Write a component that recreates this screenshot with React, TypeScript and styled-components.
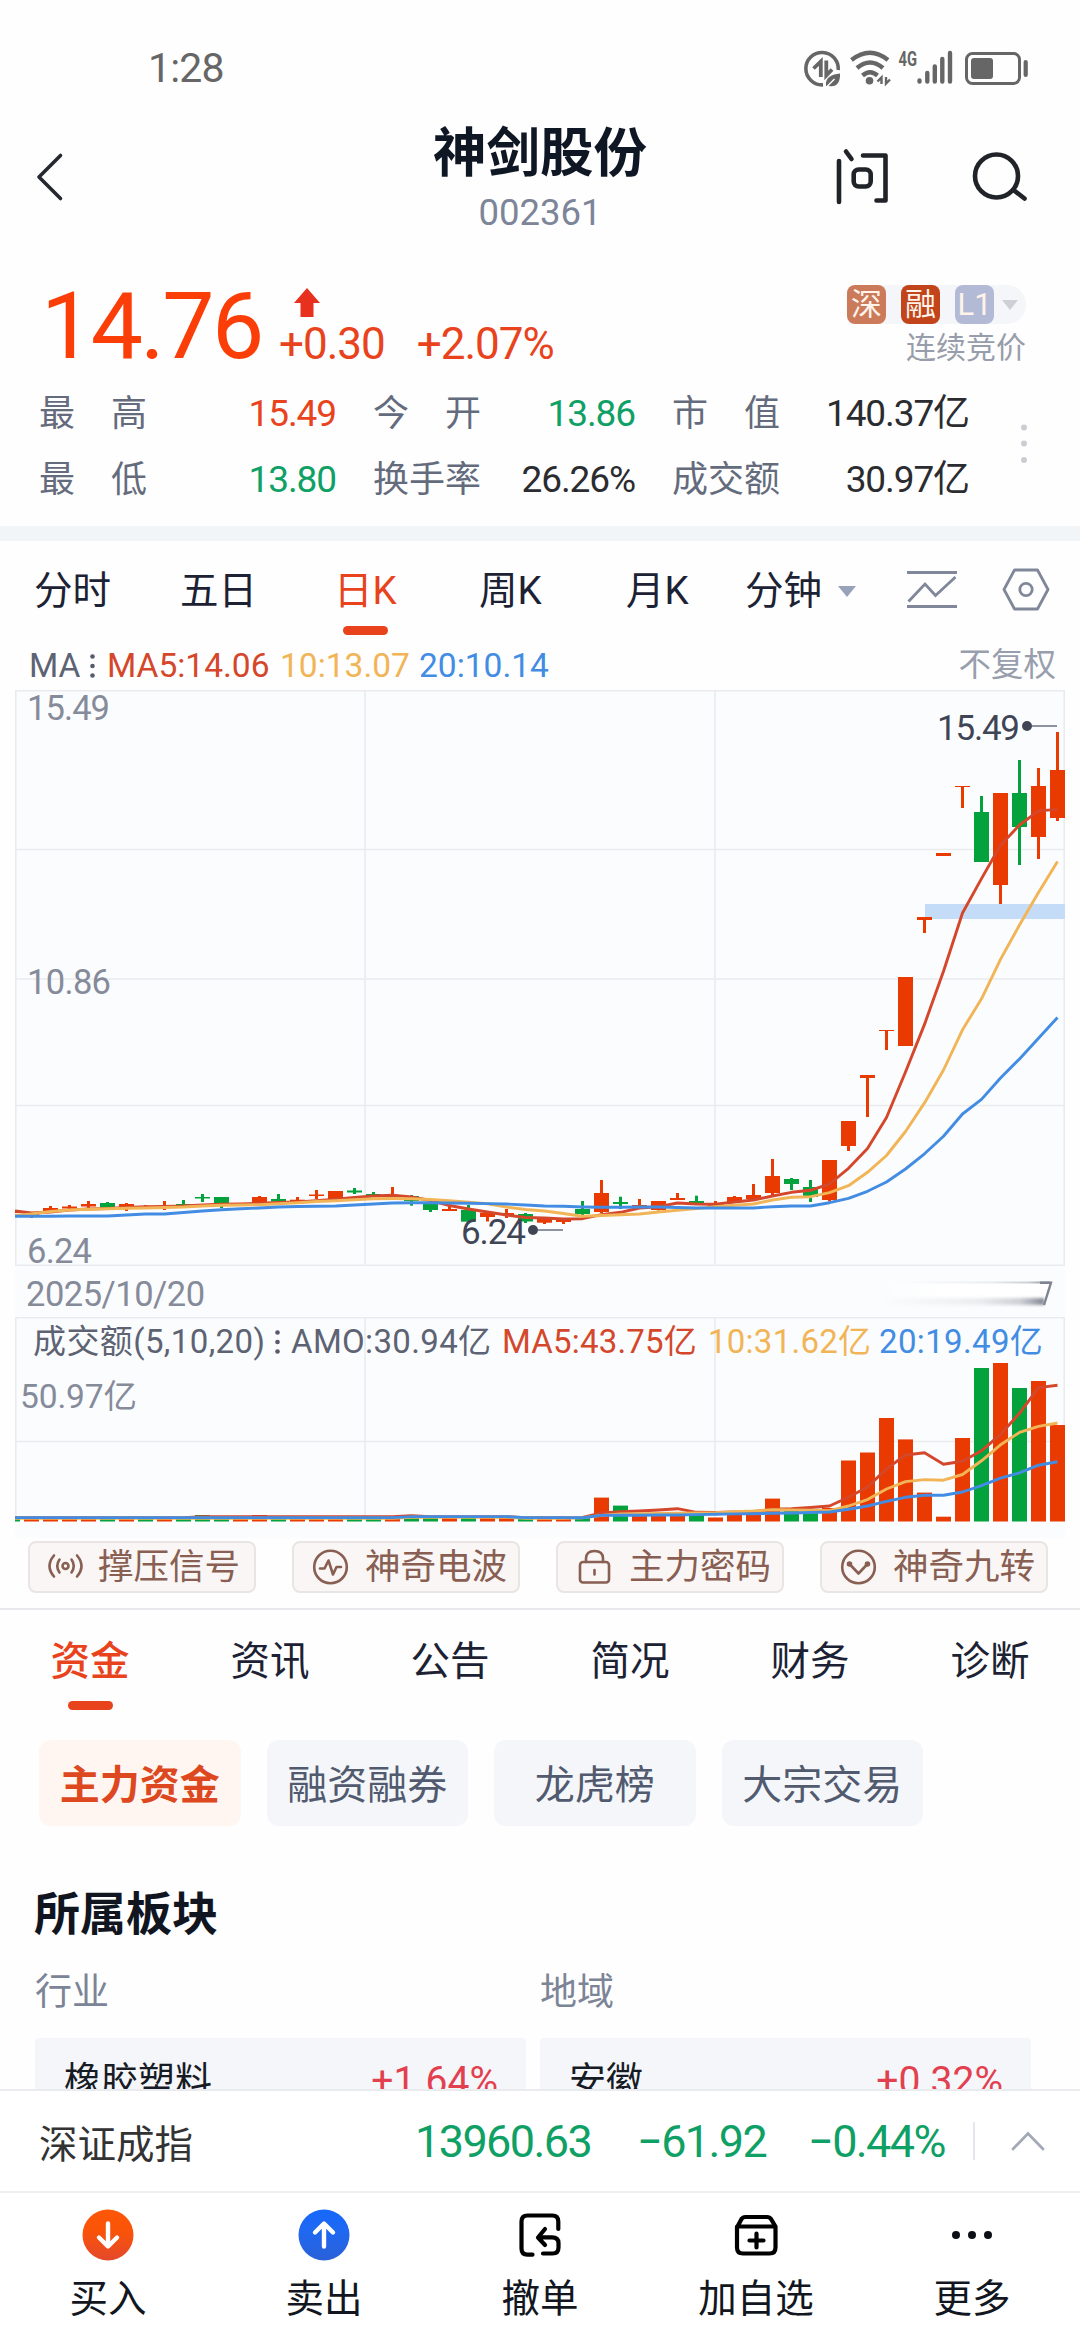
import React from "react";
import styled, { createGlobalStyle } from "styled-components";

const RED = "#e8431c";
const GREEN = "#0fa065";
const UP = "#e93a02";
const DOWN = "#04a23c";
const MA5 = "#d4472b";
const MA10 = "#f1b557";
const MA20 = "#428de3";
const INK = "#1c2233";
const FONT = `Roboto, "Noto Sans CJK SC", sans-serif`;

const GlobalStyle = createGlobalStyle`
  * { box-sizing: border-box; }
  body { margin: 0; background: #fff; font-family: ${FONT}; color: ${INK}; }
  svg { display: block; flex: none; overflow: visible; }
  svg text { font-family: ${FONT}; }
`;

const Page = styled.div`
  width: 1080px;
  height: 2340px;
  overflow: hidden;
  display: flex;
  flex-direction: column;
  background: #fefefe;
`;

/* ---------- status bar and header ---------- */

const StatusBar = styled.div`
  height: 118px;
  flex: none;
  padding: 17px 52px 0 148px;
  display: flex;
  align-items: center;
  justify-content: space-between;
  color: #666;
`;
const Clock = styled.span`
  font-size: 41px;
  letter-spacing: -0.8px;
`;
const Header = styled.header`
  height: 118px;
  flex: none;
  display: grid;
  grid-template-columns: 300px 1fr 300px;
  padding: 0 53px 0 36px;
`;
const HeaderSide = styled.div<{ $end?: boolean }>`
  display: flex;
  align-items: center;
  justify-content: ${(p) => (p.$end ? "flex-end" : "flex-start")};
  gap: 81px;
`;
const TitleBlock = styled.div`
  display: flex;
  flex-direction: column;
  align-items: center;
  padding: 6px 0 0 17px;
`;
const Title = styled.h1`
  margin: 0;
  font-size: 53.5px;
  font-weight: 700;
  line-height: 60px;
  color: #0f1624;
  white-space: nowrap;
`;
const Code = styled.span`
  margin-top: 7px;
  font-size: 36.5px;
  line-height: 44px;
  color: #7d8598;
`;

/* ---------- quote ---------- */

const Quote = styled.section`
  height: 290px;
  flex: none;
  padding-top: 44px;
`;
const PriceRow = styled.div`
  display: flex;
  height: 99px;
  padding: 0 54px 0 41px;
`;
const Price = styled.span`
  width: 234px;
  margin-top: 7px;
  font-size: 93px;
  line-height: 80px;
  letter-spacing: -2.6px;
  color: #fb3e08;
`;
const ChangeBlock = styled.div`
  padding: 8px 0 0 4px;
`;
const ChangeArrow = styled.svg`
  margin-left: 15px;
`;
const ChangeLine = styled.div`
  display: flex;
  gap: 32px;
  margin-top: 5px;
  font-size: 44px;
  line-height: 44px;
  letter-spacing: -1px;
  color: ${RED};
`;
const QuoteSide = styled.div`
  margin-left: auto;
  padding-top: 5px;
  display: flex;
  flex-direction: column;
  align-items: flex-end;
`;
const Badges = styled.div`
  display: flex;
  gap: 15px;
  padding-right: 8px;
  border-radius: 8px 20px 20px 8px;
  background: #f5f6fa;
  align-items: center;
`;
const Badge = styled.span<{ $bg: string }>`
  width: 39px;
  height: 39px;
  border-radius: 8px;
  background: ${(p) => p.$bg};
  color: #fff3ea;
  font-size: 31px;
  line-height: 39px;
  text-align: center;
`;
const BadgeCaret = styled.svg`
  margin-left: -7px;
`;
const Phase = styled.span`
  margin-top: 6px;
  font-size: 30px;
  line-height: 36px;
  color: #979daa;
`;
const StatsWrap = styled.div`
  display: flex;
  padding-left: 39px;
`;
const Stats = styled.div`
  display: grid;
  grid-template-columns: 297px 262px 297px;
  column-gap: 37px;
  grid-auto-rows: 66px;
`;
const Stat = styled.div`
  display: flex;
  justify-content: space-between;
  line-height: 70px;
  font-size: 36px;
`;
const StatLabel = styled.span`
  color: #646b7c;
`;
const StatValue = styled.span<{ $color?: string }>`
  font-size: 37px;
  letter-spacing: -1.1px;
  color: ${(p) => p.$color || "#2a2c30"};
`;
const DotsV = styled.svg`
  margin: 45px 0 0 51px;
`;
const Band = styled.div`
  height: 15px;
  flex: none;
  background: #f2f5f8;
`;

/* ---------- period tabs ---------- */

const Periods = styled.nav`
  height: 98px;
  flex: none;
  display: grid;
  grid-template-columns: 146px 154px 145px 147px 119px 162px 95px auto;
  padding-left: 34px;
  align-items: center;
`;
const Period = styled.span<{ $active?: boolean }>`
  position: relative;
  justify-self: start;
  display: flex;
  align-items: center;
  gap: 16px;
  font-size: 38.5px;
  line-height: 100px;
  color: ${(p) => (p.$active ? RED : INK)};
`;
const Underline = styled.i<{ $bottom: number }>`
  position: absolute;
  left: 50%;
  bottom: ${(p) => p.$bottom}px;
  width: 45px;
  height: 9px;
  margin-left: -22px;
  border-radius: 5px;
  background: ${RED};
`;

/* ---------- chart ---------- */

const MaRow = styled.div`
  height: 51px;
  flex: none;
  display: grid;
  grid-template-columns: 61px 17px 173px 139px 1fr auto;
  padding: 0 24px 0 29px;
  align-items: center;
  font-size: 33.5px;
  line-height: 51px;
`;
const Legend = styled.span<{ $color: string; $ls?: number }>`
  color: ${(p) => p.$color};
  letter-spacing: ${(p) => p.$ls ?? 0}px;
  white-space: nowrap;
`;
const Adjust = styled.span`
  font-size: 32.5px;
  line-height: 53px;
  color: #989ead;
`;
const ChartPanel = styled.section`
  height: 848px;
  flex: none;
  margin: 0 15px;
  background: #fbfcfe;
`;
const DateRow = styled.div`
  height: 51px;
  display: flex;
  align-items: center;
  justify-content: space-between;
  padding: 5px 13px 0 11px;
  font-size: 34.5px;
  letter-spacing: -0.5px;
  color: #868b9a;
`;
const VolumePanel = styled.div`
  position: relative;
`;
const VolumeLegend = styled.div`
  position: absolute;
  left: 18px;
  top: 0;
  display: grid;
  grid-template-columns: 242px 16px 211px 206px 171px auto;
  align-items: center;
  font-size: 33px;
  line-height: 49px;
`;

/* ---------- signals ---------- */

const Signals = styled.div`
  height: 72px;
  flex: none;
  display: flex;
  gap: 36px;
  padding: 3px 28px 0;
  border-bottom: 2px solid #e6e8ec;
`;
const Signal = styled.button<{ $gap: number }>`
  width: 228px;
  height: 52px;
  display: flex;
  align-items: center;
  padding: 0 0 0 ${(p) => p.$gap + 2}px;
  gap: ${(p) => p.$gap}px;
  border: 2px solid #e9e5e5;
  border-radius: 8px;
  background: #f9f6f5;
  font: 35.5px/48px ${FONT};
  color: #885f52;
  white-space: nowrap;
`;

/* ---------- lower content ---------- */

const Lower = styled.main`
  flex: 1;
  min-height: 0;
  overflow: hidden;
`;
const InfoTabs = styled.nav`
  height: 100px;
  display: grid;
  grid-template-columns: repeat(6, 1fr);
`;
const InfoTab = styled.span<{ $active?: boolean }>`
  position: relative;
  height: 100px;
  text-align: center;
  font-size: 39.5px;
  line-height: 103px;
  font-weight: ${(p) => (p.$active ? 500 : 400)};
  color: ${(p) => (p.$active ? RED : INK)};
`;
const Chips = styled.div`
  display: flex;
  gap: 26px;
  margin-top: 30px;
  padding-left: 39px;
`;
const Chip = styled.span<{ $active?: boolean }>`
  width: 201.5px;
  height: 86px;
  border-radius: 12px;
  text-align: center;
  font-size: 40px;
  line-height: 91px;
  font-weight: ${(p) => (p.$active ? 700 : 400)};
  color: ${(p) => (p.$active ? "#dd4820" : "#515a6e")};
  background: ${(p) => (p.$active ? "#fff6f2" : "#f4f6fa")};
`;
const SectionTitle = styled.h2`
  margin: 58px 0 29px 34px;
  font-size: 46px;
  line-height: 60px;
  font-weight: 700;
  color: #10151f;
`;
const Sectors = styled.div`
  display: grid;
  grid-template-columns: 491px 491px;
  gap: 14px;
  padding-left: 35px;
`;
const SectorLabel = styled.div`
  margin-bottom: 25px;
  font-size: 37px;
  line-height: 40px;
  color: #7c8497;
`;
const SectorCard = styled.div`
  height: 86px;
  padding: 0 28px 0 29px;
  display: flex;
  justify-content: space-between;
  font-size: 37px;
  line-height: 87px;
  color: #171b24;
  background: #f4f6fa;
  border-radius: 4px;
`;
const SectorChange = styled.span`
  color: #e3404f;
  font-size: 39px;
`;

/* ---------- bottom ---------- */

const IndexBar = styled.div`
  height: 102px;
  flex: none;
  display: grid;
  grid-template-columns: 376px 222px 171px 165px 38px auto;
  align-items: center;
  padding: 0 0 0 39px;
  border-top: 2px solid #e9ebee;
  background: #fff;
`;
const IndexName = styled.span`
  font-size: 38.5px;
  color: #333;
`;
const IndexValue = styled.span`
  font-size: 45px;
  letter-spacing: -1.6px;
  color: ${GREEN};
  white-space: nowrap;
`;
const Divider = styled.i`
  width: 2px;
  height: 38px;
  background: #e3e6eb;
`;
const ActionBar = styled.footer`
  height: 149px;
  flex: none;
  display: grid;
  grid-template-columns: repeat(5, 1fr);
  border-top: 2px solid #eceef0;
  background: #fff;
`;
const Action = styled.div`
  display: flex;
  flex-direction: column;
  align-items: center;
  padding-top: 16px;
  font-size: 38.5px;
  line-height: 50px;
  color: #111620;
`;
const ActionIcon = styled.div`
  height: 52px;
  margin-bottom: 13px;
  display: flex;
  align-items: center;
`;

/* ---------- chart data (pixel levels on the 1080-wide canvas) ---------- */

type Candle = [color: "r" | "g", high: number, top: number, bottom: number, low: number];

const CANDLES: Candle[] = [
  ["r", 1209, 1210, 1213, 1213], ["r", 1213, 1214, 1216, 1218], ["r", 1206, 1208, 1211, 1211],
  ["r", 1205, 1206.5, 1208.5, 1210], ["r", 1201, 1204, 1206.5, 1208.5], ["g", 1202, 1203, 1208, 1208],
  ["r", 1203, 1204, 1208, 1211], ["r", 1205, 1206, 1208, 1208], ["r", 1201, 1205.5, 1207.5, 1210],
  ["g", 1200, 1204, 1206, 1206], ["g", 1194, 1197, 1198.5, 1202], ["g", 1197, 1197, 1204, 1208],
  ["r", 1203, 1204, 1206, 1206], ["r", 1196, 1197, 1203, 1203], ["g", 1194, 1199, 1201.5, 1202],
  ["r", 1197, 1199.7, 1201.5, 1202], ["r", 1190, 1194.5, 1196, 1199], ["r", 1191, 1191, 1199, 1199],
  ["g", 1188, 1190.5, 1192.5, 1194], ["g", 1192, 1194, 1196, 1197], ["r", 1187, 1195, 1197, 1198],
  ["g", 1195, 1196, 1201, 1205.7], ["g", 1203, 1204, 1210, 1212], ["r", 1204.5, 1209, 1211, 1211],
  ["g", 1205, 1210, 1221.7, 1222], ["r", 1212, 1212.7, 1217, 1221.5], ["r", 1209, 1213, 1215, 1218],
  ["g", 1213, 1214, 1221.5, 1223], ["r", 1217, 1218, 1222.7, 1224], ["r", 1218, 1219, 1222, 1224],
  ["g", 1201, 1209, 1214, 1215], ["r", 1180, 1193, 1212, 1213], ["g", 1196.7, 1202, 1204, 1209],
  ["r", 1199, 1205, 1206.5, 1207], ["r", 1201, 1201, 1210, 1210.5], ["r", 1193, 1198, 1200, 1200],
  ["g", 1195.7, 1201, 1203.5, 1204], ["r", 1201, 1203, 1206, 1206], ["r", 1196, 1197, 1202, 1202],
  ["r", 1184, 1195, 1199, 1199], ["r", 1159, 1176, 1193, 1195], ["g", 1178, 1179, 1184, 1190],
  ["g", 1180, 1187, 1197, 1202], ["r", 1160, 1160, 1200, 1201.5], ["r", 1121, 1121, 1146, 1151],
  ["r", 1075, 1075, 1078, 1117], ["r", 1030, 1030, 1031, 1050], ["r", 977, 977, 1046, 1046],
  ["r", 917, 917, 920, 933], ["r", 853, 853, 856, 856], ["r", 786, 786, 787, 808],
  ["g", 796, 812, 862, 862], ["r", 793, 793, 885, 904], ["g", 760, 793, 827, 865],
  ["r", 768, 786, 837, 859], ["r", 732, 770, 818, 821],
];

const PRICE_MA5 = [
  1211, 1213, 1212, 1210, 1209, 1208.5, 1207.5, 1206.7, 1206.5, 1206, 1205, 1204.3, 1204, 1203.3,
  1202.5, 1202, 1200.8, 1199.3, 1197.5, 1196, 1195.3, 1197, 1200.5, 1205.5, 1209, 1212, 1215, 1217.5,
  1218, 1219, 1218.7, 1214.7, 1212.3, 1208, 1206.7, 1203, 1204, 1204.3, 1202, 1200, 1196, 1192.3,
  1190.3, 1184, 1168.3, 1148.5, 1117.5, 1072, 1024.4, 971.2, 913, 878.6, 845.3, 825, 810.9, 809.4,
];
const PRICE_MA10 = [
  1215.5, 1214, 1211.5, 1210, 1209.2, 1208.8, 1208.3, 1208, 1207.5, 1207, 1206, 1205.3, 1205, 1204.7,
  1203.7, 1202.7, 1201.5, 1200.7, 1199.7, 1198.7, 1198.5, 1198.7, 1199.5, 1200.8, 1202.3, 1203.7, 1207,
  1209.5, 1211, 1213.5, 1216.3, 1215.5, 1214.7, 1214, 1212, 1210.3, 1208.5, 1206.7, 1205.3, 1204, 1200,
  1197.3, 1196.7, 1192.7, 1185.7, 1172.3, 1155.5, 1131.5, 1102.9, 1070, 1029.8, 998.8, 959.4, 925,
  892.4, 861.4,
];
const PRICE_MA20 = [
  1216.3, 1216.3, 1216.2, 1216, 1216, 1216, 1215, 1214, 1214, 1212.5, 1211, 1209.7, 1208.7, 1208, 1207,
  1206.5, 1206.2, 1206, 1205, 1204, 1203, 1202.7, 1202.8, 1203, 1203.3, 1203.6, 1204, 1205, 1206,
  1206.3, 1207, 1207.3, 1207.2, 1207, 1207, 1207.5, 1208, 1208, 1208, 1208, 1206.7, 1206, 1206, 1202.7,
  1198.3, 1191.3, 1182, 1169, 1153.8, 1136.2, 1114, 1099.4, 1078, 1058.9, 1038.2, 1017.5,
];

const VOLUME_COLORS = "grrrrgrgrgggrrgrrrggrggrgrrgrrgrgrrrgrrrrggrrrrrrrrgrgrr";
const VOLUME_TOPS: Record<number, number> = {
  10: 1515, 13: 1515, 31: 1497.6, 32: 1505.6, 33: 1515, 34: 1515, 35: 1514, 36: 1514, 37: 1517.5,
  38: 1515, 39: 1510, 40: 1498.6, 41: 1508, 42: 1512, 43: 1508, 44: 1460.5, 45: 1452.5, 46: 1418,
  47: 1439.4, 48: 1492.6, 49: 1516.7, 50: 1438, 51: 1368, 52: 1363, 53: 1388, 54: 1381, 55: 1425,
};
const flat = Array.from({ length: 30 }, (_, i) => (i > 20 && i < 27 ? 1516.6 : 1517.6));
const VOL_MA5 = [
  ...flat.map((v, i) => (i > 9 && i < 22 ? v - 1 : v)),
  1517.4, 1513, 1511.8, 1511, 1510, 1508.7, 1512.3, 1512.5, 1512, 1511.7, 1509.3, 1508.7, 1507.5, 1506,
  1497.3, 1487, 1468.9, 1455, 1452.8, 1464.2, 1461.2, 1450.8, 1434.4, 1413.3, 1387.6, 1385.3,
];
const VOL_MA10 = [
  ...flat.map((v) => v + 0.6),
  1517.7, 1515.4, 1514, 1513.7, 1513.5, 1513.2, 1513, 1512.7, 1511.7, 1511, 1509.7, 1510, 1510.3, 1510.7,
  1506, 1499.6, 1489, 1481.6, 1479.6, 1480.2, 1474.5, 1460.8, 1444.8, 1432.4, 1426.4, 1423,
];
const VOL_MA20 = [
  ...flat,
  1517.7, 1515.4, 1515.2, 1515.2, 1515, 1515, 1514.6, 1514.2, 1513.9, 1513.7, 1513.3, 1513, 1512.5, 1512,
  1509.3, 1506, 1501.3, 1497.3, 1495.3, 1495.3, 1492, 1485.6, 1478.2, 1472.9, 1465.2, 1461.8,
];

const cx = (i: number) => 12.5 + 19 * i;
const line = (ys: number[]) => ys.map((y, i) => `${i === 0 ? 15 : cx(i)},${y}`).join(" ");

/* The first candle is cut by the left edge of the plot. */
function slot(i: number) {
  const x = Math.max(15, cx(i) - 7.5);
  return { x, width: cx(i) + 7.5 - x };
}

function MaLines({ sets }: { sets: [number[], number[], number[]] }) {
  const colors = [MA5, MA10, MA20];
  return (
    <g fill="none" strokeWidth="2.9" strokeLinejoin="round">
      {sets.map((s, k) => (
        <polyline key={k} points={line(s)} stroke={colors[k]} />
      ))}
    </g>
  );
}

function PriceChart() {
  return (
    <svg width="1050" height="576" viewBox="15 690 1050 576">
      <g stroke="#e9ebef" strokeWidth="1.6">
        {[690.8, 849.5, 979, 1105.5, 1265.2].map((y) => (
          <line key={y} x1="15" x2="1065" y1={y} y2={y} />
        ))}
        {[15.8, 365, 715, 1064.2].map((x) => (
          <line key={x} x1={x} x2={x} y1="690" y2="1266" />
        ))}
      </g>
      <rect x="925" y="904" width="140" height="15" fill="#c5dcf8" />
      {CANDLES.map(([c, high, top, bottom, low], i) => (
        <g key={i} fill={c === "r" ? UP : DOWN}>
          {i > 0 && <rect x={cx(i) - 1.5} y={high} width="3" height={low - high} />}
          <rect {...slot(i)} y={top} height={bottom - top} />
        </g>
      ))}
      <MaLines sets={[PRICE_MA5, PRICE_MA10, PRICE_MA20]} />
      <g fontSize="34.5" fill="#868b9a">
        <text x="27" y="720" textLength="83">15.49</text>
        <text x="27" y="994" textLength="84">10.86</text>
        <text x="27" y="1263" textLength="65">6.24</text>
      </g>
      <g fontSize="35" fill="#3f4555">
        <text x="937" y="740" textLength="83">15.49</text>
        <text x="461" y="1244" textLength="65">6.24</text>
        <circle cx="1027" cy="726" r="5" />
        <circle cx="533" cy="1230" r="5" />
      </g>
      <g stroke="#8d93a1" strokeWidth="2">
        <line x1="1032" x2="1057" y1="726" y2="726" />
        <line x1="538" x2="563" y1="1230" y2="1230" />
      </g>
    </svg>
  );
}

function VolumeChart() {
  return (
    <svg width="1050" height="221" viewBox="15 1317 1050 221">
      <g stroke="#e9ebef" strokeWidth="1.6">
        <line x1="15" x2="1065" y1="1317.8" y2="1317.8" />
        <line x1="15" x2="1065" y1="1441.5" y2="1441.5" />
        {[15.8, 365, 715, 1064.2].map((x) => (
          <line key={x} x1={x} x2={x} y1="1317" y2="1521" />
        ))}
      </g>
      {VOLUME_COLORS.split("").map((c, i) => {
        const top = VOLUME_TOPS[i] ?? 1517;
        return <rect key={i} {...slot(i)} y={top} height={1521.5 - top} fill={c === "r" ? UP : DOWN} />;
      })}
      <MaLines sets={[VOL_MA5, VOL_MA10, VOL_MA20]} />
      <text x="20" y="1408" fontSize="33.5" fill="#868b9a" textLength="117">50.97亿</text>
    </svg>
  );
}

function DragHandle() {
  return (
    <svg width="180" height="36" viewBox="870 1276 180 36">
      <defs>
        <linearGradient id="edge" x1="0" x2="1">
          <stop offset="0" stopColor="#868b9a" stopOpacity="0" />
          <stop offset="0.6" stopColor="#868b9a" stopOpacity="0.16" />
          <stop offset="0.85" stopColor="#868b9a" stopOpacity="0.4" />
          <stop offset="1" stopColor="#767b88" stopOpacity="0.9" />
        </linearGradient>
        <linearGradient id="veil" x1="0" x2="1">
          <stop offset="0" stopColor="#fff" stopOpacity="0" />
          <stop offset="0.4" stopColor="#fff" />
        </linearGradient>
        <filter id="soft" x="-5%" width="110%" y="-100%" height="300%">
          <feGaussianBlur stdDeviation="1 1.8" />
        </filter>
      </defs>
      <path d="M876 1282H1050L1042 1305H876z" fill="url(#veil)" />
      <rect x="880" y="1298" width="162" height="7" fill="url(#edge)" filter="url(#soft)" />
      <rect x="900" y="1281.5" width="148" height="2" fill="url(#edge)" />
      <path d="M1038 1282.7H1049L1042 1305" fill="none" stroke="#7f8492" strokeWidth="2.4" />
    </svg>
  );
}

/* ---------- icons ---------- */

const LegendDots = () => (
  <svg width="5" height="26" viewBox="0 0 5 26" fill="#555b6b">
    <circle cx="2.5" cy="3.5" r="2.3" />
    <circle cx="2.5" cy="13" r="2.3" />
    <circle cx="2.5" cy="22.5" r="2.3" />
  </svg>
);

const StatusIcons = () => (
  <svg width="226" height="38" viewBox="802 47 226 38" fill="none" stroke="#666">
    <path d="M838.2 68A16.2 16.2 0 1 0 823 82.8" strokeWidth="3.6" />
    <path d="M820.8 75V59.5L813.5 66.5" strokeWidth="3.8" />
    <path d="M826.3 58.5V73.5L832 67.5" strokeWidth="3.8" />
    <path d="M826 84C825 75 832 72.500 840 71.500C840.500 81 836 85.500 829 84z" fill="#666" stroke="none" />
    <path d="M826.500 85L834.500 77" stroke="#fff" strokeWidth="1.500" />
    <g strokeWidth="4.400">
      <path d="M851.500 58Q870 43.500 888 58" />
      <path d="M857 66Q870 55 883 66" />
      <path d="M862.500 73.500Q870 67 877.500 73.500" />
    </g>
    <circle cx="869.500" cy="78.700" r="3.800" fill="#666" stroke="none" />
    <path d="M881.500 82V75.500L877.500 79.500M886 75V81.500L890 77.500" strokeWidth="2.400" />
    <text x="898.500" y="63.500" fontSize="20" fontWeight="700" fill="#666" stroke="none" textLength="18.500" lengthAdjust="spacingAndGlyphs">4G</text>
    <path d="M919.500 78.500V79.500M927.300 71V79.500M934.800 64.500V79.500M942.300 57V79.500M950 51V79.500" strokeWidth="4.400" strokeLinecap="round" />
    <rect x="966.500" y="51.500" width="53" height="30" rx="6" strokeWidth="3" />
    <rect x="971" y="56" width="22" height="21" rx="3" fill="#666" stroke="none" />
    <path d="M1025.700 60V73" strokeWidth="4.200" strokeLinecap="round" />
  </svg>
);

const BackIcon = () => (
  <svg width="28" height="50" viewBox="0 0 28 50" fill="none" stroke="#25282e" strokeWidth="3.600" strokeLinecap="round" strokeLinejoin="round">
    <path d="M24.500 3.500L3 25L24.500 46.500" />
  </svg>
);

const AskIcon = () => (
  <svg width="54" height="58" viewBox="835 148 54 58" fill="none" stroke="#202328" strokeWidth="4.600" strokeLinecap="round" strokeLinejoin="round">
    <path d="M838 161V202M845 151.500L850.500 159M862 155.500H884.500V200.500H875.500" />
    <rect x="852.700" y="169.500" width="17" height="17" rx="5" />
  </svg>
);

const SearchIcon = () => (
  <svg width="56" height="52" viewBox="972 152 56 52" fill="none" stroke="#202328" strokeWidth="4.600" strokeLinecap="round">
    <circle cx="997.500" cy="177" r="21.500" />
    <path d="M1014.500 191L1025.500 199.500" />
  </svg>
);

const LineStyleIcon = () => (
  <svg width="50" height="42" viewBox="0 0 50 42" fill="none" stroke="#7f8798" strokeWidth="2.800">
    <path d="M0 2.500H50M0 36.500H50M1.500 31.500L18 14L28.500 25.500L48.500 7" />
  </svg>
);

const HexIcon = () => (
  <svg width="48" height="44" viewBox="0 1.500 48 44" fill="none" stroke="#7f8798" strokeWidth="2.800" strokeLinejoin="round">
    <path d="M12.500 2.500H35.500L46 22L35.500 41.500H12.500L2 22z" />
    <circle cx="24" cy="22" r="6.200" />
  </svg>
);

const signalStroke = { fill: "none", stroke: "#885f52", strokeWidth: 2.6, strokeLinecap: "round", strokeLinejoin: "round" } as const;

const BeaconIcon = () => (
  <svg width="37" height="36" viewBox="0 0 37 36" {...signalStroke}>
    <circle cx="18.500" cy="17" r="3" />
    <path d="M12.500 10.500Q8 17 12.500 23.500M24.500 10.500Q29 17 24.500 23.500M7 6.500Q-2 17 7 27.500M30 6.500Q39 17 30 27.500" />
  </svg>
);
const PulseIcon = () => (
  <svg width="37" height="36" viewBox="0 0 37 36" {...signalStroke}>
    <circle cx="18.500" cy="18" r="16.300" />
    <path d="M8 19.500H12.500L16.500 11.500L21 25.500L24.500 18H29" />
  </svg>
);
const LockIcon = () => (
  <svg width="37" height="36" viewBox="0 0 37 36" {...signalStroke}>
    <rect x="4" y="13" width="29" height="20.500" rx="3" />
    <path d="M10 13V9.500Q10 2 18.500 2T27 9.500V13M18.500 21V25.500" />
  </svg>
);
const TurnIcon = () => (
  <svg width="37" height="36" viewBox="0 0 37 36" {...signalStroke}>
    <circle cx="18.500" cy="18" r="16.300" />
    <path d="M9 14.500L18.500 24.500L28 14.500" />
    <circle cx="9.500" cy="15" r="1.500" fill="#885f52" />
    <circle cx="27.500" cy="15" r="1.500" fill="#885f52" />
  </svg>
);

const RoundArrow = ({ up }: { up?: boolean }) => (
  <svg width="52" height="52" viewBox="0 0 52 52">
    <defs>
      <linearGradient id={up ? "sell" : "buy"} x1="0" y1="0" x2="0" y2="1">
        <stop offset="0" stopColor={up ? "#1668fb" : "#fd5607"} />
        <stop offset="0.4" stopColor={up ? "#1f68f2" : "#fa5408"} />
        <stop offset="1" stopColor={up ? "#2a60d8" : "#e4482a"} />
      </linearGradient>
    </defs>
    <circle cx="26" cy="26" r="25.500" fill={up ? "url(#sell)" : "url(#buy)"} />
    <path
      d={up ? "M26 37.500V15.500M17 23.500L26 14.500L35 23.500" : "M26 14.500V36.500M17 28.500L26 37.500L35 28.500"}
      fill="none" stroke="#fff" strokeWidth="4.400" strokeLinecap="round" strokeLinejoin="round"
    />
  </svg>
);

const CancelIcon = () => (
  <svg width="44" height="46" viewBox="518 2213 44 46" fill="none" stroke="#000" strokeWidth="4.200" strokeLinecap="round" strokeLinejoin="round">
    <path d="M558.300 2230V2222.500Q558.300 2216.500 552.300 2216.500H527.500Q521.500 2216.500 521.500 2222.500V2249.500Q521.500 2255.700 527.500 2255.700H532.500" />
    <path d="M545 2230L538 2238.500L545 2246M539 2238.300H552Q558.500 2238.300 558.500 2244V2248.500Q558.500 2254.500 552.500 2254.500H543" />
  </svg>
);
const AddIcon = () => (
  <svg width="46" height="46" viewBox="732 2212 46 46" fill="none" stroke="#000" strokeWidth="4.200" strokeLinecap="round" strokeLinejoin="round">
    <path d="M736.500 2226.500L740.500 2219Q741.800 2217 744.500 2217H766Q768.700 2217 770 2219L774.500 2226.500V2247.500Q774.500 2253.500 768.500 2253.500H742Q736 2253.500 736 2247.500V2226.500H774.500" />
    <path d="M748.500 2240.500H762.500M755.500 2233.500V2247.500" />
  </svg>
);
const MoreIcon = () => (
  <svg width="42" height="12" viewBox="0 0 42 12" fill="#0c1017">
    <circle cx="5" cy="6" r="4" />
    <circle cx="21" cy="6" r="4" />
    <circle cx="37" cy="6" r="4" />
  </svg>
);

const STATS: [string, string, string?][] = [
  ["最　高", "15.49", RED],
  ["今　开", "13.86", GREEN],
  ["市　值", "140.37亿"],
  ["最　低", "13.80", GREEN],
  ["换手率", "26.26%"],
  ["成交额", "30.97亿"],
];

const SIGNALS: [React.FC, string, number][] = [
  [BeaconIcon, "撑压信号", 14.5],
  [PulseIcon, "神奇电波", 16],
  [LockIcon, "主力密码", 16],
  [TurnIcon, "神奇九转", 16],
];

const SECTORS = [
  ["行业", "橡胶塑料", "+1.64%"],
  ["地域", "安徽", "+0.32%"],
];

const ACTIONS: [React.ReactNode, string][] = [
  [<RoundArrow />, "买入"],
  [<RoundArrow up />, "卖出"],
  [<CancelIcon />, "撤单"],
  [<AddIcon />, "加自选"],
  [<MoreIcon />, "更多"],
];

export default function App() {
  return (
    <Page lang="zh-CN">
      <GlobalStyle />
      <StatusBar>
        <Clock>1:28</Clock>
        <StatusIcons />
      </StatusBar>

      <Header>
        <HeaderSide><BackIcon /></HeaderSide>
        <TitleBlock>
          <Title>神剑股份</Title>
          <Code>002361</Code>
        </TitleBlock>
        <HeaderSide $end>
          <AskIcon />
          <SearchIcon />
        </HeaderSide>
      </Header>

      <Quote>
        <PriceRow>
          <Price>14.76</Price>
          <ChangeBlock>
            <ChangeArrow width="26" height="29" viewBox="0 0 26 29" fill="#e8301f">
              <path d="M13 0L26 15H19.500V29H6.500V15H0z" />
            </ChangeArrow>
            <ChangeLine>
              <span>+0.30</span>
              <span>+2.07%</span>
            </ChangeLine>
          </ChangeBlock>
          <QuoteSide>
            <Badges>
              <Badge $bg="#cb7a5a">深</Badge>
              <Badge $bg="#c2441a">融</Badge>
              <Badge $bg="#b3bad6">L1</Badge>
              <BadgeCaret width="16" height="10" viewBox="0 0 16 10" fill="#cdd0d6">
                <path d="M0 0H16L8 10z" />
              </BadgeCaret>
            </Badges>
            <Phase>连续竞价</Phase>
          </QuoteSide>
        </PriceRow>
        <StatsWrap>
          <Stats>
            {STATS.map(([label, value, color]) => (
              <Stat key={label}>
                <StatLabel>{label}</StatLabel>
                <StatValue $color={color}>{value}</StatValue>
              </Stat>
            ))}
          </Stats>
          <DotsV width="8" height="40" viewBox="0 0 8 40" fill="#cbcdd2">
            <circle cx="4" cy="3.500" r="3" />
            <circle cx="4" cy="19.500" r="3" />
            <circle cx="4" cy="36" r="3" />
          </DotsV>
        </StatsWrap>
      </Quote>
      <Band />

      <Periods>
        <Period>分时</Period>
        <Period>五日</Period>
        <Period $active>日K<Underline $bottom={6} /></Period>
        <Period>周K</Period>
        <Period>月K</Period>
        <Period>
          分钟
          <svg width="18" height="12" viewBox="0 0 18 12" fill="#98a2b8"><path d="M0 1H18L9 12z" /></svg>
        </Period>
        <LineStyleIcon />
        <HexIcon />
      </Periods>

      <MaRow>
        <Legend $color="#5d6373">MA</Legend>
        <LegendDots />
        <Legend $color={MA5}>MA5:14.06</Legend>
        <Legend $color={MA10}>10:13.07</Legend>
        <Legend $color={MA20}>20:10.14</Legend>
        <Adjust>不复权</Adjust>
      </MaRow>

      <ChartPanel>
        <PriceChart />
        <DateRow>
          <span>2025/10/20</span>
          <DragHandle />
        </DateRow>
        <VolumePanel>
          <VolumeChart />
          <VolumeLegend>
            <Legend $color="#5d6373" $ls={0.4}>成交额(5,10,20)</Legend>
            <LegendDots />
            <Legend $color="#5d6373" $ls={0.35}>AMO:30.94亿</Legend>
            <Legend $color={MA5} $ls={0.2}>MA5:43.75亿</Legend>
            <Legend $color={MA10} $ls={0.25}>10:31.62亿</Legend>
            <Legend $color={MA20} $ls={0.35}>20:19.49亿</Legend>
          </VolumeLegend>
        </VolumePanel>
      </ChartPanel>

      <Signals>
        {SIGNALS.map(([Icon, label, gap]) => (
          <Signal key={label} $gap={gap}><Icon />{label}</Signal>
        ))}
      </Signals>

      <Lower>
        <InfoTabs>
          {["资金", "资讯", "公告", "简况", "财务", "诊断"].map((t, i) => (
            <InfoTab key={t} $active={i === 0}>
              {t}
              {i === 0 && <Underline $bottom={0} />}
            </InfoTab>
          ))}
        </InfoTabs>
        <Chips>
          {["主力资金", "融资融券", "龙虎榜", "大宗交易"].map((t, i) => (
            <Chip key={t} $active={i === 0}>{t}</Chip>
          ))}
        </Chips>
        <SectionTitle>所属板块</SectionTitle>
        <Sectors>
          {SECTORS.map(([label, name, change]) => (
            <div key={label}>
              <SectorLabel>{label}</SectorLabel>
              <SectorCard>
                <span>{name}</span>
                <SectorChange>{change}</SectorChange>
              </SectorCard>
            </div>
          ))}
        </Sectors>
      </Lower>

      <IndexBar>
        <IndexName>深证成指</IndexName>
        <IndexValue>13960.63</IndexValue>
        <IndexValue>−61.92</IndexValue>
        <IndexValue>−0.44%</IndexValue>
        <Divider />
        <svg width="34" height="20" viewBox="0 0 34 20" fill="none" stroke="#a3a9b6" strokeWidth="2.800" strokeLinecap="round">
          <path d="M2 18L17 2.500L32 18" />
        </svg>
      </IndexBar>
      <ActionBar>
        {ACTIONS.map(([icon, label]) => (
          <Action key={label}>
            <ActionIcon>{icon}</ActionIcon>
            {label}
          </Action>
        ))}
      </ActionBar>
    </Page>
  );
}
